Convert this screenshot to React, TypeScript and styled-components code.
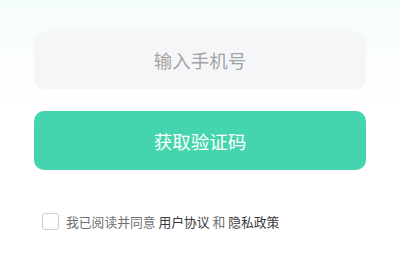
import React from 'react';
import styled, { createGlobalStyle } from 'styled-components';

const GlobalStyle = createGlobalStyle`
  html, body {
    margin: 0;
    padding: 0;
    background: #fff;
  }
  body {
    font-family: "Noto Sans CJK SC", "Noto Sans", sans-serif;
  }
`;

const Page = styled.div`
  width: 400px;
  height: 280px;
  box-sizing: border-box;
  padding: 31px 34px 0;
  background: linear-gradient(180deg, #f4fcfa 0%, #fbfefd 20%, #ffffff 40%);
  display: flex;
  flex-direction: column;
`;

const PhoneInput = styled.input`
  height: 58px;
  border: none;
  outline: none;
  border-radius: 10px;
  background: #f5f6f8;
  text-align: center;
  font-family: inherit;
  font-size: 18.5px;
  color: #333;
  padding: 0;

  &::placeholder {
    color: #a3a3a6;
  }
`;

const CodeButton = styled.button`
  margin-top: 22px;
  height: 59px;
  border: none;
  border-radius: 10px;
  background: #45d5ae;
  color: #fff;
  font-family: inherit;
  font-size: 18.5px;
  cursor: pointer;
`;

const Agreement = styled.label`
  margin-top: 42px;
  margin-left: 8px;
  display: flex;
  align-items: center;
  gap: 7px;
  font-size: 12.8px;
  color: #6f6f72;
`;

const Box = styled.span`
  width: 17px;
  height: 17px;
  box-sizing: border-box;
  border: 1.5px solid #cfcfd2;
  border-radius: 3px;
  background: #fff;
  flex-shrink: 0;
`;

const Link = styled.span<{ $strong?: boolean }>`
  color: ${(p) => (p.$strong ? '#3a3a3c' : '#6f6f72')};
`;

export default function App() {
  return (
    <>
      <GlobalStyle />
      <Page>
        <PhoneInput placeholder="输入手机号" />
        <CodeButton>获取验证码</CodeButton>
        <Agreement>
          <Box />
          <span>
            我已阅读并同意 <Link $strong>用户协议</Link> 和 <Link $strong>隐私政策</Link>
          </span>
        </Agreement>
      </Page>
    </>
  );
}
